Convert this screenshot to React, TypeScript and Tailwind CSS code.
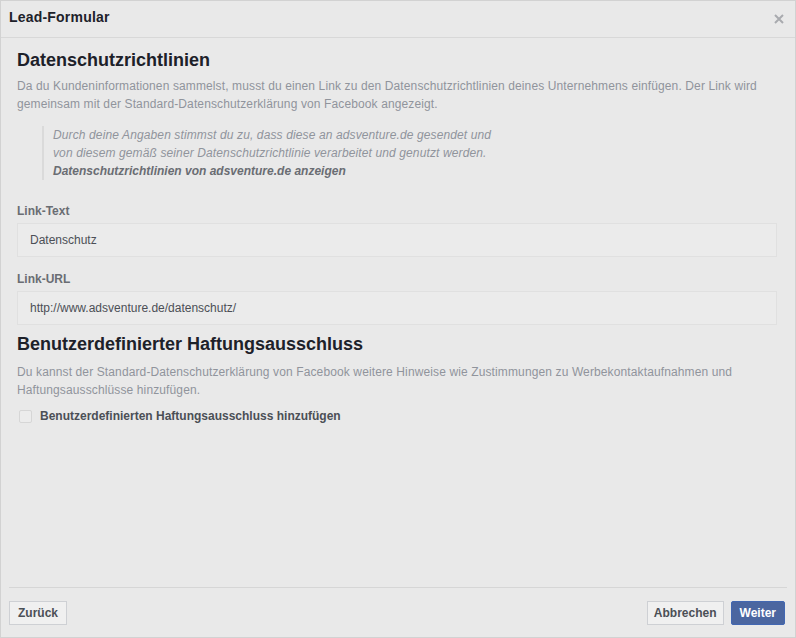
export default function App() {
  const font = { fontFamily: '"Liberation Sans", Arial, Helvetica, sans-serif' };

  return (
    <div
      style={font}
      className="w-[796px] h-[638px] bg-[#e9e9e9] border border-[#d2d2d2] flex flex-col text-[12px] text-[#4b4f56]"
    >
      {/* Header */}
      <div className="h-[37px] shrink-0 flex items-center justify-between pl-[8px] pr-[11px] pb-[3px] border-b border-[#d8d8d8]">
        <div className="text-[14px] font-bold text-[#1d2129] tracking-[0.2px]">Lead-Formular</div>
        <svg width="10" height="10" viewBox="0 0 10 10" className="mt-[3px]">
          <path d="M1 1 L9 9 M9 1 L1 9" stroke="#a9abaf" strokeWidth="2" />
        </svg>
      </div>

      {/* Body */}
      <div className="flex-1 pl-[16px] pr-[18px] pt-[10px]">
        <h2 className="text-[18px] font-bold text-[#1d2129] leading-[24px]">Datenschutzrichtlinien</h2>
        <p className="mt-[5px] leading-[18px] text-[#90949c] tracking-[0.12px]">
          Da du Kundeninformationen sammelst, musst du einen Link zu den Datenschutzrichtlinien deines Unternehmens einfügen. Der Link wird
          gemeinsam mit der Standard-Datenschutzerklärung von Facebook angezeigt.
        </p>
        <div className="mt-[13px] ml-[25px] pl-[9px] border-l-2 border-[#dadada] leading-[18px] italic text-[#90949c] tracking-[0.12px]">
          <div>Durch deine Angaben stimmst du zu, dass diese an adsventure.de gesendet und</div>
          <div>von diesem gemäß seiner Datenschutzrichtlinie verarbeitet und genutzt werden.</div>
          <div className="font-bold text-[#6a6d73] tracking-normal">Datenschutzrichtlinien von adsventure.de anzeigen</div>
        </div>

        <div className="mt-[23px] font-bold text-[#6a6d73] leading-[16px]">Link-Text</div>
        <div className="mt-[4px] h-[34px] border border-[#e0e0e0] bg-[#ebebeb] flex items-center px-[12px] text-[#4b4f56]">
          Datenschutz
        </div>

        <div className="mt-[14px] font-bold text-[#6a6d73] leading-[16px]">Link-URL</div>
        <div className="mt-[4px] h-[34px] border border-[#e0e0e0] bg-[#ebebeb] flex items-center px-[12px] text-[#4b4f56]">
          http://www.adsventure.de/datenschutz/
        </div>

        <h2 className="mt-[7px] text-[18px] font-bold text-[#1d2129] leading-[24px]">Benutzerdefinierter Haftungsausschluss</h2>
        <p className="mt-[7px] leading-[18px] text-[#90949c] tracking-[0.12px]">
          Du kannst der Standard-Datenschutzerklärung von Facebook weitere Hinweise wie Zustimmungen zu Werbekontaktaufnahmen und
          Haftungsausschlüsse hinzufügen.
        </p>
        <label className="mt-[8px] flex items-center gap-[8px] ml-[2px]">
          <span className="w-[13px] h-[13px] border border-[#d6d6d6] bg-[#ececec] rounded-[2px]" />
          <span className="font-bold text-[#4b4f56]">Benutzerdefinierten Haftungsausschluss hinzufügen</span>
        </label>
      </div>

      {/* Footer */}
      <div className="mx-[8px] border-t border-[#d6d6d6]" />
      <div className="h-[49px] shrink-0 flex items-center justify-between pl-[8px] pr-[10px]">
        <button className="h-[24px] px-[8px] border border-[#ced0d4] bg-[#f0f0f0] font-bold text-[#4b4f56]">
          Zurück
        </button>
        <div className="flex gap-[7px]">
          <button className="h-[24px] px-[6px] border border-[#ced0d4] bg-[#f0f0f0] font-bold text-[#4b4f56]">
            Abbrechen
          </button>
          <button className="h-[24px] px-[8px] border border-[#4267b2] bg-[#4b66a0] font-bold text-white rounded-[2px]">
            Weiter
          </button>
        </div>
      </div>
    </div>
  );
}
